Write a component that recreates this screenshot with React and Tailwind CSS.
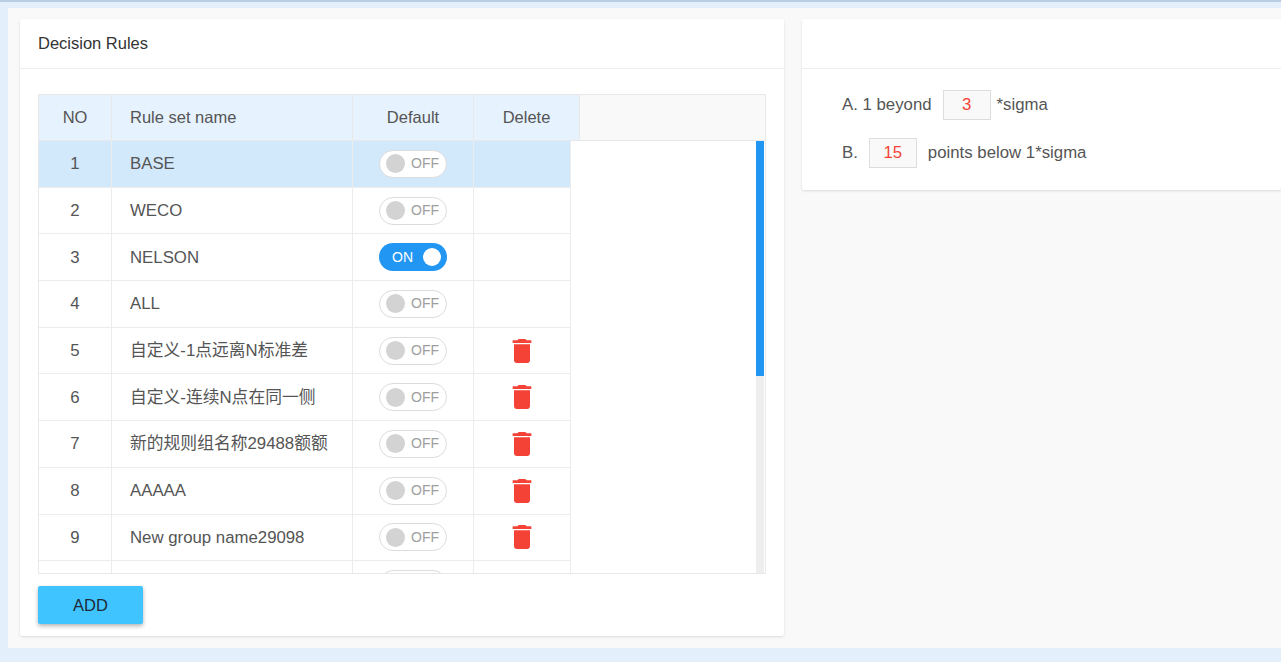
import React from "react";

const rows = [
  { no: 1, name: "BASE", on: false, del: false, sel: true },
  { no: 2, name: "WECO", on: false, del: false },
  { no: 3, name: "NELSON", on: true, del: false },
  { no: 4, name: "ALL", on: false, del: false },
  { no: 5, name: "自定义-1点远离N标准差", on: false, del: true },
  { no: 6, name: "自定义-连续N点在同一侧", on: false, del: true },
  { no: 7, name: "新的规则组名称29488额额", on: false, del: true },
  { no: 8, name: "AAAAA", on: false, del: true },
  { no: 9, name: "New group name29098", on: false, del: true },
  { no: "", name: "", on: false, del: false },
];

const Toggle = ({ on }) =>
  on ? (
    <div className="w-[68px] h-[28px] rounded-full bg-[#2196f3] flex items-center justify-between pl-[13px] pr-[6px]">
      <span className="text-white text-[14px]">ON</span>
      <span className="w-[18px] h-[18px] rounded-full bg-white" />
    </div>
  ) : (
    <div className="w-[68px] h-[28px] rounded-full border border-[#dcdcdc] bg-white flex items-center pl-[6px] gap-[6px]">
      <span className="w-[19px] h-[19px] rounded-full bg-[#d3d3d3]" />
      <span className="text-[#9e9e9e] text-[14px]">OFF</span>
    </div>
  );

const Trash = () => (
  <svg width="20" height="24" viewBox="5 3 14 18" fill="#f44336">
    <path d="M6 19c0 1.1.9 2 2 2h8c1.1 0 2-.9 2-2V7H6v12zM19 4h-3.5l-1-1h-5l-1 1H5v2h14V4z" />
  </svg>
);

export default function App() {
  return (
    <div className="w-[1281px] h-[662px] bg-[#e3f0fb] border-t-2 border-[#b9cde0] pt-[6px] pl-[8px]" style={{ fontFamily: "Arial, 'Liberation Sans', 'Noto Sans CJK SC', sans-serif" }}>
      <div className="h-[640px] bg-[#f9f9f9] flex gap-[18px] pl-[12px] pt-[11px]">
        <div className="w-[764px] h-[617px] bg-white rounded-[2px] shadow-sm flex flex-col">
          <div className="h-[50px] border-b border-[#eee] flex items-center pl-[18px] text-[16.5px] text-[#333]">Decision Rules</div>
          <div className="px-[18px] pt-[25px]">
            <div className="border border-[#e8e8e8] h-[480px] flex flex-col">
              <div className="flex h-[46px] bg-[#f9f9f9] text-[16.5px] text-[#555] border-b border-[#e8e8e8]">
                <div className="flex bg-[#e6f2fd]">
                  <div className="w-[73px] flex items-center justify-center border-r border-[#e8e8e8]">NO</div>
                  <div className="w-[241px] flex items-center pl-[18px] border-r border-[#e8e8e8]">Rule set name</div>
                  <div className="w-[121px] flex items-center justify-center border-r border-[#e8e8e8]">Default</div>
                  <div className="w-[106px] flex items-center justify-center border-r border-[#e8e8e8]">Delete</div>
                </div>
              </div>
              <div className="flex flex-1 overflow-hidden">
                <div className="flex-1 overflow-hidden">
                  {rows.map((r, i) => (
                    <div key={i} className={`flex w-[532px] h-[46.7px] border-b border-[#ececec] text-[16.8px] text-[#555] ${r.sel ? "bg-[#d2e8fb]" : "bg-white"}`}>
                      <div className="w-[73px] shrink-0 flex items-center justify-center border-r border-[#ececec]">{r.no}</div>
                      <div className="w-[241px] shrink-0 flex items-center pl-[18px] border-r border-[#ececec]">{r.name}</div>
                      <div className="w-[121px] shrink-0 flex items-center justify-center border-r border-[#ececec]"><Toggle on={r.on} /></div>
                      <div className="w-[97px] shrink-0 flex items-center justify-center border-r border-[#ececec]">{r.del && <Trash />}</div>
                    </div>
                  ))}
                </div>
                <div className="w-[8px] mr-[1px] bg-[#eeeeee] flex flex-col">
                  <div className="h-[235px] bg-[#2196f3]" />
                </div>
              </div>
            </div>
            <button className="mt-[12px] w-[105px] h-[38px] bg-[#40c4ff] rounded-[2px] shadow-[0_2px_4px_rgba(0,0,0,0.3)] text-[16.5px] text-[#1e2a3a]">ADD</button>
          </div>
        </div>
        <div className="flex-1 h-[171px] bg-white rounded-[2px] shadow-sm flex flex-col">
          <div className="h-[50px] border-b border-[#eee]" />
          <div className="pl-[40px] pt-[21px] flex flex-col gap-[18px] text-[16.8px] text-[#555]">
            <div className="flex items-center">
              <span>A. 1 beyond</span>
              <span className="ml-[11px] w-[48px] h-[30px] border border-[#ddd] bg-[#f9f9f9] flex items-center justify-center text-[#f44336]">3</span>
              <span className="ml-[6px]">*sigma</span>
            </div>
            <div className="flex items-center">
              <span>B.</span>
              <span className="ml-[11px] w-[48px] h-[30px] border border-[#ddd] bg-[#f9f9f9] flex items-center justify-center text-[#f44336]">15</span>
              <span className="ml-[11px]">points below 1*sigma</span>
            </div>
          </div>
        </div>
      </div>
    </div>
  );
}
